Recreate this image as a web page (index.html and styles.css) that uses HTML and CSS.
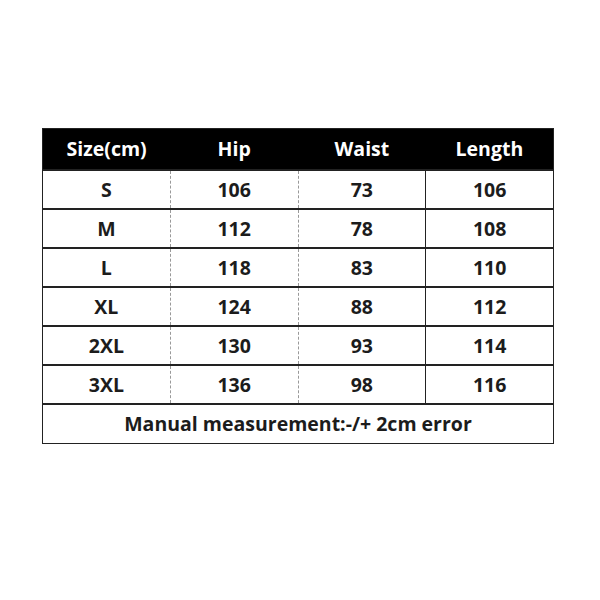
FILE: index.html
```html
<!DOCTYPE html>
<html>
<head>
<meta charset="utf-8">
<link rel="stylesheet" href="styles.css">
</head>
<body>
<div class="page">
  <table class="size-table">
    <thead>
      <tr><th>Size(cm)</th><th>Hip</th><th>Waist</th><th>Length</th></tr>
    </thead>
    <tbody>
      <tr><td>S</td><td>106</td><td>73</td><td>106</td></tr>
      <tr><td>M</td><td>112</td><td>78</td><td>108</td></tr>
      <tr><td>L</td><td>118</td><td>83</td><td>110</td></tr>
      <tr><td>XL</td><td>124</td><td>88</td><td>112</td></tr>
      <tr><td>2XL</td><td>130</td><td>93</td><td>114</td></tr>
      <tr><td>3XL</td><td>136</td><td>98</td><td>116</td></tr>
      <tr class="note"><td colspan="4">Manual measurement:-/+ 2cm error</td></tr>
    </tbody>
  </table>
</div>
</body>
</html>
```
FILE: styles.css
```css
html, body {
  margin: 0;
  padding: 0;
  background: #ffffff;
}
.page {
  width: 600px;
  height: 600px;
  padding-top: 128px;
  padding-left: 42px;
  box-sizing: border-box;
}
.size-table {
  width: 512px;
  border-collapse: collapse;
  table-layout: fixed;
  font-family: "Open Sans", "DejaVu Sans", sans-serif;
  font-weight: 700;
  font-size: 19.5px;
  line-height: 1;
  color: #1c1c1c;
  border: 1.5px solid #222;
}
.size-table th {
  background: #000;
  color: #fff;
  height: 40px;
  padding: 0;
  text-align: center;
  font-weight: 700;
}
.size-table td {
  height: 37px;
  padding: 0;
  text-align: center;
  border-top: 2px solid #222;
  border-left: 1px dashed #999;
}
.size-table td:first-child {
  border-left: none;
}
.size-table tr td:last-child {
  border-left: 1px solid #222;
}
.size-table .note td {
  height: 38px;
  border-left: none;
}
```
